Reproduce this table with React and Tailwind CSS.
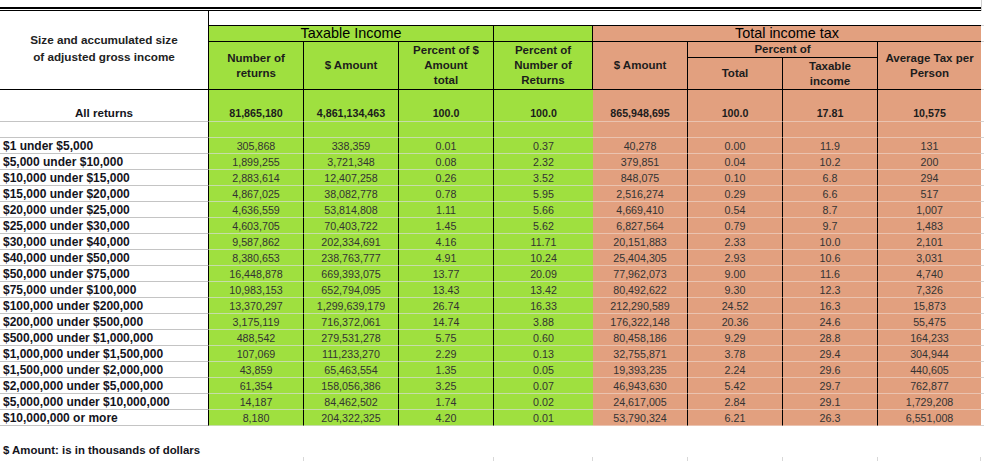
import clsx from "clsx";

const cols = "grid grid-cols-[209px_95px_95px_95px_99px_95px_95px_95px_103px_3px]";

const rows = [
  ["$1 under $5,000", "305,868", "338,359", "0.01", "0.37", "40,278", "0.00", "11.9", "131"],
  ["$5,000 under $10,000", "1,899,255", "3,721,348", "0.08", "2.32", "379,851", "0.04", "10.2", "200"],
  ["$10,000 under $15,000", "2,883,614", "12,407,258", "0.26", "3.52", "848,075", "0.10", "6.8", "294"],
  ["$15,000 under $20,000", "4,867,025", "38,082,778", "0.78", "5.95", "2,516,274", "0.29", "6.6", "517"],
  ["$20,000 under $25,000", "4,636,559", "53,814,808", "1.11", "5.66", "4,669,410", "0.54", "8.7", "1,007"],
  ["$25,000 under $30,000", "4,603,705", "70,403,722", "1.45", "5.62", "6,827,564", "0.79", "9.7", "1,483"],
  ["$30,000 under $40,000", "9,587,862", "202,334,691", "4.16", "11.71", "20,151,883", "2.33", "10.0", "2,101"],
  ["$40,000 under $50,000", "8,380,653", "238,763,777", "4.91", "10.24", "25,404,305", "2.93", "10.6", "3,031"],
  ["$50,000 under $75,000", "16,448,878", "669,393,075", "13.77", "20.09", "77,962,073", "9.00", "11.6", "4,740"],
  ["$75,000 under $100,000", "10,983,153", "652,794,095", "13.43", "13.42", "80,492,622", "9.30", "12.3", "7,326"],
  ["$100,000 under $200,000", "13,370,297", "1,299,639,179", "26.74", "16.33", "212,290,589", "24.52", "16.3", "15,873"],
  ["$200,000 under $500,000", "3,175,119", "716,372,061", "14.74", "3.88", "176,322,148", "20.36", "24.6", "55,475"],
  ["$500,000 under $1,000,000", "488,542", "279,531,278", "5.75", "0.60", "80,458,186", "9.29", "28.8", "164,233"],
  ["$1,000,000 under $1,500,000", "107,069", "111,233,270", "2.29", "0.13", "32,755,871", "3.78", "29.4", "304,944"],
  ["$1,500,000 under $2,000,000", "43,859", "65,463,554", "1.35", "0.05", "19,393,235", "2.24", "29.6", "440,605"],
  ["$2,000,000 under $5,000,000", "61,354", "158,056,386", "3.25", "0.07", "46,943,630", "5.42", "29.7", "762,877"],
  ["$5,000,000 under $10,000,000", "14,187", "84,462,502", "1.74", "0.02", "24,617,005", "2.84", "29.1", "1,729,208"],
  ["$10,000,000 or more", "8,180", "204,322,325", "4.20", "0.01", "53,790,324", "6.21", "26.3", "6,551,008"],
];

const allReturns = ["All returns", "81,865,180", "4,861,134,463", "100.0", "100.0", "865,948,695", "100.0", "17.81", "10,575"];

// column styling for the body (index 1..8)
const bodyCol = [
  "bg-white border-r border-r-black border-b-[#c4c4c4]",
  "bg-[#9fe03f] border-r border-r-black border-b-[#c6dda9]",
  "bg-[#9fe03f] border-r border-r-black border-b-[#c6dda9]",
  "bg-[#9fe03f] border-r border-r-black border-b-[#c6dda9]",
  "bg-[#9fe03f] border-b-[#c6dda9]",
  "bg-[#e2a07f] border-r border-r-black border-b-[#eac3b0]",
  "bg-[#e2a07f] border-r border-r-black border-b-[#eac3b0]",
  "bg-[#e2a07f] border-r border-r-black border-b-[#eac3b0]",
  "bg-[#e2a07f] border-b-[#eac3b0]",
];

function Head({ className, children }) {
  return (
    <div
      className={clsx(
        "flex items-center justify-center text-center font-bold text-[11.5px] leading-[15px] text-[#1c1c1c] border-black",
        className
      )}
    >
      {children}
    </div>
  );
}

function BodyRow({ cells, tall, bold, blank }) {
  return (
    <div className={clsx(cols, tall ? "h-[32px]" : "h-[16px]")}>
      {bodyCol.map((c, i) => (
        <div
          key={i}
          className={clsx(
            "flex border-b whitespace-nowrap",
            c,
            tall ? "items-end pb-[1px]" : "items-center",
            i === 0 && !tall ? "justify-start pl-[3px]" : "justify-center"
          )}
        >
          {!blank &&
            (i === 0 ? (
              <span
                className={clsx(
                  "font-bold text-[#14141c]",
                  tall ? "text-[11.6px] leading-[14px]" : "text-[12px] leading-[14px]"
                )}
              >
                {cells[0]}
              </span>
            ) : (
              <span
                className={clsx(
                  "text-[10.7px] leading-[14px]",
                  bold ? "font-bold text-[#1c1c1c]" : "text-[#333]"
                )}
              >
                {cells[i]}
              </span>
            ))}
        </div>
      ))}
      <div className="border-b border-[#d4d4d4]" />
    </div>
  );
}

export default function App() {
  return (
    <div className="w-[984px] h-[461px] overflow-hidden bg-white font-['Liberation_Sans',Arial,sans-serif]">
      {/* top double rule */}
      <div className="w-[982px] h-[11px] border-r border-[#cfcfcf]">
        <div className="w-[981px] h-[7px]" />
        <div className="w-[981px] h-[4px] border-t-2 border-b border-black" />
      </div>

      {/* header */}
      <div className={clsx(cols, "grid-rows-[15px_16px_16px_32px]")}>
        <Head className="row-span-4 bg-white border-r border-b pb-[3px] text-[11.7px] leading-[16.5px] text-[#222]">
          Size and accumulated size
          <br />
          of adjusted gross income
        </Head>
        <div className="col-span-8 bg-white border-b border-black" />
        <div className="border-b border-[#d4d4d4]" />

        <div className="col-span-3 bg-[#9fe03f] border-r border-b border-black flex items-center justify-center text-[14.4px] leading-[15px] text-black">
          Taxable Income
        </div>
        <div className="bg-[#9fe03f] border-r border-b border-black" />
        <div className="col-span-4 bg-[#e2a07f] border-b border-black flex items-center justify-center text-[14.4px] leading-[15px] text-black">
          Total income tax
        </div>
        <div className="border-b border-[#d4d4d4]" />

        <Head className="row-span-2 bg-[#9fe03f] border-r border-b">
          Number of
          <br />
          returns
        </Head>
        <Head className="row-span-2 bg-[#9fe03f] border-r border-b">$ Amount</Head>
        <Head className="row-span-2 bg-[#9fe03f] border-r border-b">
          Percent of $
          <br />
          Amount
          <br />
          total
        </Head>
        <Head className="row-span-2 bg-[#9fe03f] border-r border-b">
          Percent of
          <br />
          Number of
          <br />
          Returns
        </Head>
        <Head className="row-span-2 bg-[#e2a07f] border-r border-b">$ Amount</Head>
        <Head className="col-span-2 bg-[#e2a07f] border-r border-b">Percent of</Head>
        <Head className="row-span-2 bg-[#e2a07f] border-b">
          Average Tax per
          <br />
          Person
        </Head>
        <div className="row-span-2 border-b border-[#d4d4d4]" />
        <Head className="bg-[#e2a07f] border-r border-b">Total</Head>
        <Head className="bg-[#e2a07f] border-r border-b">
          Taxable
          <br />
          income
        </Head>
      </div>

      {/* body */}
      <BodyRow cells={allReturns} tall bold />
      <BodyRow cells={[]} blank />
      {rows.map((r, idx) => (
        <BodyRow key={idx} cells={r} />
      ))}

      {/* footnote */}
      <div className="h-[31px] flex items-end pl-[3px]">
        <span className="font-bold text-[11.4px] leading-[14px] text-[#14141c]">
          $ Amount: is in thousands of dollars
        </span>
      </div>
      <div className={clsx(cols, "h-[4px]")}>
        <div className="border-r border-[#ffffff]" />
        <div className="border-r border-[#d8d8d8]" />
        <div className="border-r border-[#ffffff]" />
        <div className="border-r border-[#d8d8d8]" />
        <div className="border-r border-[#d8d8d8]" />
        <div className="border-r border-[#d8d8d8]" />
        <div className="border-r border-[#d8d8d8]" />
        <div className="border-r border-[#d8d8d8]" />
        <div className="border-r border-[#d8d8d8]" />
        <div />
      </div>
    </div>
  );
}
